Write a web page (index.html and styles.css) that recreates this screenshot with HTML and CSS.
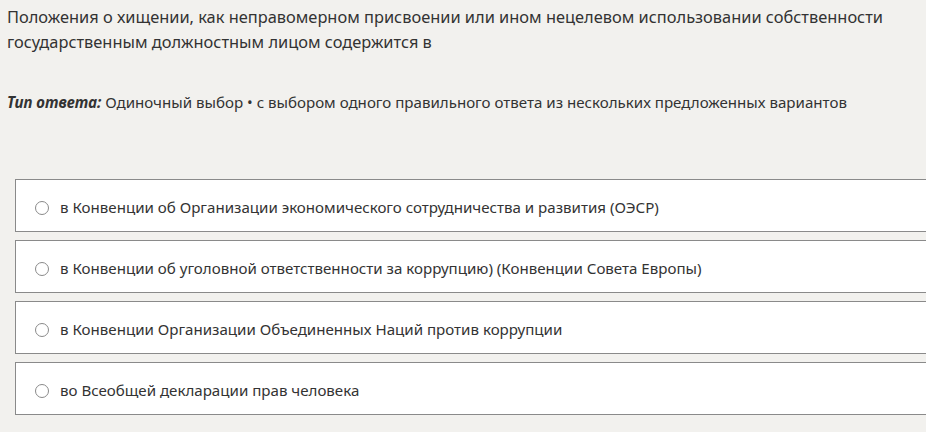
FILE: index.html
```html
<!DOCTYPE html>
<html lang="ru">
<head>
    <meta charset="UTF-8">
    <meta name="viewport" content="width=device-width, initial-scale=1.0">
    <title>Вопрос</title>
    <link rel="stylesheet" href="styles.css">
</head>
<body>
    <div class="question">
        <div class="question-text">
            Положения о хищении, как неправомерном присвоении или ином нецелевом использовании собственности государственным должностным лицом содержится в
        </div>
        <div class="answer-type">
            <em>Тип ответа:</em> Одиночный выбор • с выбором одного правильного ответа из нескольких предложенных вариантов
        </div>
        <div class="options">
            <label class="option">
                <input type="radio" name="answer">
                <span>в Конвенции об Организации экономического сотрудничества и развития (ОЭСР)</span>
            </label>
            <label class="option">
                <input type="radio" name="answer">
                <span>в Конвенции об уголовной ответственности за коррупцию) (Конвенции Совета Европы)</span>
            </label>
            <label class="option">
                <input type="radio" name="answer">
                <span>в Конвенции Организации Объединенных Наций против коррупции</span>
            </label>
            <label class="option">
                <input type="radio" name="answer">
                <span>во Всеобщей декларации прав человека</span>
            </label>
        </div>
    </div>
</body>
</html>
```

FILE: styles.css
```css
* {
    margin: 0;
    padding: 0;
    box-sizing: border-box;
}

body {
    font-family: "Noto Sans", "Open Sans", sans-serif;
    background-color: #f2f1ee;
    color: #333;
    overflow: hidden;
}

.question {
    padding: 4px 0 0 7px;
}

.question-text {
    font-size: 16.4px;
    line-height: 25px;
    width: 905px;
}

.answer-type {
    margin-top: 37px;
    font-size: 15.1px;
    line-height: 22px;
}

.answer-type em {
    font-weight: 700;
}

.options {
    margin-top: 66px;
    margin-left: 8px;
    display: flex;
    flex-direction: column;
    gap: 8px;
    width: 911px;
}

.option {
    display: flex;
    align-items: center;
    gap: 11px;
    height: 53px;
    padding: 2px 0 0 19px;
    background: #fff;
    border: 1px solid #8a8a8a;
    border-right: none;
    font-size: 15.1px;
    cursor: pointer;
}

.option input {
    appearance: none;
    width: 14px;
    height: 14px;
    margin-top: 3px;
    border: 1px solid #8a8a8a;
    border-radius: 50%;
    background: #fff;
    flex-shrink: 0;
}
```
